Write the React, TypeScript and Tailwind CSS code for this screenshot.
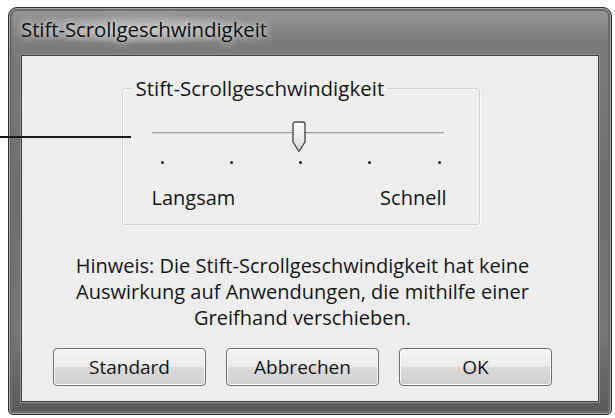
import React from "react";

const font = { fontFamily: '"Open Sans", "Noto Sans", Arial, sans-serif' };

const ticks = [0, 1, 2, 3, 4];

function Thumb() {
  return (
    <svg width="14" height="32" viewBox="0 0 14 32" className="absolute left-[140px] top-[-12px]">
      <defs>
        <linearGradient id="thumbFill" x1="0" y1="0" x2="0" y2="1">
          <stop offset="0" stopColor="#fbfbfb" />
          <stop offset="0.55" stopColor="#ececec" />
          <stop offset="1" stopColor="#cfcfcf" />
        </linearGradient>
      </defs>
      <path
        d="M1 3.5 Q1 1 3.5 1 H10.5 Q13 1 13 3.5 V21 L7 30.5 L1 21 Z"
        fill="url(#thumbFill)"
        stroke="#4a4a4a"
        strokeWidth="1.4"
        strokeLinejoin="round"
      />
    </svg>
  );
}

function Button({ label }: { label: string }) {
  return (
    <button className="h-[38px] w-[153px] rounded-[4px] border border-[#6e6e6e] bg-[linear-gradient(#f4f4f4_0%,#ebebeb_48%,#dadada_52%,#cfcfcf_100%)] text-[19px] font-medium text-[#161616] shadow-[inset_0_0_0_1px_#fbfbfb]">
      {label}
    </button>
  );
}

export default function App() {
  return (
    <div className="relative h-[418px] w-[615px] overflow-hidden bg-white pl-[8px] pt-[7px]" style={font}>
      {/* callout line */}
      <div className="absolute left-0 top-[136px] z-10 h-[2px] w-[131px] bg-[#1a1a1a]" />

      <div className="flex h-[408px] w-[604px] flex-col rounded-t-[9px] rounded-b-[5px] border border-[#2e2e2e] bg-[linear-gradient(180deg,#9a9a9a_0%,#7c7c7c_8%,#6e6e6e_45%,#767676_80%,#5a5a5a_100%)] px-[12px] pb-[12px] shadow-[inset_0_0_0_1px_#a8a8a8,inset_0_0_0_3px_#6a6a6a]">
        <div className="flex h-[47px] shrink-0 items-center pb-[4px]">
          <span className="-ml-[4px] rounded-[20px] bg-[radial-gradient(closest-side,rgba(215,215,215,0.75),rgba(200,200,200,0.35)_70%,rgba(200,200,200,0))] px-[4px] text-[20.5px] font-medium tracking-[-0.1px] text-[#111] [text-shadow:0_0_6px_#d6d6d6,0_0_10px_#c8c8c8]">
            Stift-Scrollgeschwindigkeit
          </span>
        </div>

        <div className="flex flex-1 flex-col items-center border border-[#3f3f3f] bg-[#ededed] pr-[15px] pt-[20px] font-medium text-[#161616] shadow-[0_0_0_1px_#8d8d8d]">
          <fieldset className="mr-[4px] h-[149px] w-[358px] rounded-[3px] border border-[#d2d2d2] shadow-[inset_1px_1px_0_#fafafa,1px_1px_0_#fafafa]">
            <legend className="ml-[10px] px-[3px] text-[20.5px] leading-[24px]">Stift-Scrollgeschwindigkeit</legend>

            <div className="px-[29px]">
              <div className="relative mt-[32px] h-[3px] w-[292px] border-t border-[#9c9c9c] bg-[#e2e2e2] shadow-[0_1px_0_#fafafa]">
                <Thumb />
              </div>

              <div className="mt-[26px] flex justify-between px-[9px]">
                {ticks.map((t) => (
                  <span key={t} className="h-[3px] w-[3px] rounded-full bg-[#1e1e1e]" />
                ))}
              </div>

              <div className="mt-[22px] flex justify-between pr-[3px] text-[20px] leading-[24px]">
                <span>Langsam</span>
                <span>Schnell</span>
              </div>
            </div>
          </fieldset>

          <p className="mt-[28px] text-center text-[20px] leading-[26px]">
            Hinweis: Die Stift-Scrollgeschwindigkeit hat keine
            <br />
            Auswirkung auf Anwendungen, die mithilfe einer
            <br />
            Greifhand verschieben.
          </p>

          <div className="mt-[17px] flex gap-[20px]">
            <Button label="Standard" />
            <Button label="Abbrechen" />
            <Button label="OK" />
          </div>
        </div>
      </div>
    </div>
  );
}
